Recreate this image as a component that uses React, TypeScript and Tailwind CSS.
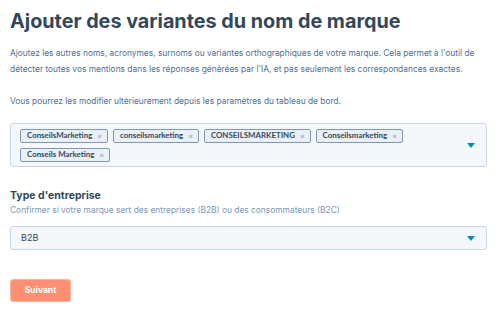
import React from "react";

const tags = ["ConseilsMarketing", "conseilsmarketing", "CONSEILSMARKETING", "Conseilsmarketing", "Conseils Marketing"];

function Caret() {
  return (
    <svg width="8" height="5" viewBox="0 0 8 5" className="shrink-0">
      <path d="M0 0 L8 0 L4 5 Z" fill="#0091ae" />
    </svg>
  );
}

export default function App() {
  return (
    <div className="w-[500px] h-[324px] bg-white px-[10px] pt-[8px] text-[#33475b]" style={{ fontFamily: "Inter, 'Noto Sans', sans-serif" }}>
      <h1 className="text-[19.8px] font-bold leading-[26px] text-[#33475b]">Ajouter des variantes du nom de marque</h1>
      <p className="mt-[11px] text-[8.4px] leading-[16px] text-[#516f90]">
        Ajoutez les autres noms, acronymes, surnoms ou variantes orthographiques de votre marque. Cela permet à l'outil de détecter toutes vos mentions dans les réponses générées par l'IA, et pas seulement les correspondances exactes.
      </p>
      <p className="mt-[16px] text-[8.4px] leading-[16px] text-[#516f90]">
        Vous pourrez les modifier ultérieurement depuis les paramètres du tableau de bord.
      </p>
      <div className="mt-[14px] w-[477px] h-[44px] rounded-[3px] border border-[#cbd6e2] bg-[#f5f8fa] flex items-center pl-[9px] pr-[11px]">
        <div className="flex flex-wrap gap-x-[5px] gap-y-[5px] flex-1" style={{ fontFamily: "Lato, sans-serif" }}>
          {tags.map((t) => (
            <span key={t} className="h-[14px] flex items-center gap-[5px] pl-[6px] pr-[5px] border border-[#7c98b6] bg-[#eaf0f6] rounded-[2px] text-[7.9px] font-bold text-[#33475b]">
              {t}
              <span className="text-[8px] font-normal text-[#7c98b6]">×</span>
            </span>
          ))}
        </div>
        <Caret />
      </div>
      <div className="mt-[22px] text-[10.5px] font-bold leading-[14px] text-[#33475b]">Type d'entreprise</div>
      <div className="mt-[1px] text-[8.4px] leading-[12px] text-[#7c98b6]">Confirmer si votre marque sert des entreprises (B2B) ou des consommateurs (B2C)</div>
      <div className="mt-[10px] w-[477px] h-[24px] rounded-[3px] border border-[#cbd6e2] bg-[#f5f8fa] flex items-center justify-between pl-[10px] pr-[11px]">
        <span className="text-[9px] text-[#33475b]">B2B</span>
        <Caret />
      </div>
      <button className="mt-[29px] w-[61px] h-[23px] rounded-[3px] bg-[#ff8f73] border border-[#ffb29c] text-white text-[8.5px] font-bold">Suivant</button>
    </div>
  );
}
